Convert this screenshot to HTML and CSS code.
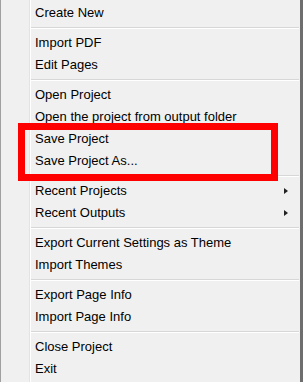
FILE: index.html
```html
<!DOCTYPE html>
<html>
<head>
<meta charset="utf-8">
<link rel="stylesheet" href="styles.css">
</head>
<body>
<div class="menu">
  <div class="item">Create New</div>
  <div class="sep"></div>
  <div class="item">Import PDF</div>
  <div class="item">Edit Pages</div>
  <div class="sep"></div>
  <div class="item">Open Project</div>
  <div class="item">Open the project from output folder</div>
  <div class="item">Save Project</div>
  <div class="item">Save Project As...</div>
  <div class="sep"></div>
  <div class="item"><span>Recent Projects</span><span class="arrow"></span></div>
  <div class="item"><span>Recent Outputs</span><span class="arrow"></span></div>
  <div class="sep"></div>
  <div class="item">Export Current Settings as Theme</div>
  <div class="item">Import Themes</div>
  <div class="sep"></div>
  <div class="item">Export Page Info</div>
  <div class="item">Import Page Info</div>
  <div class="sep"></div>
  <div class="item">Close Project</div>
  <div class="item">Exit</div>
  <div class="highlight"></div>
</div>
</body>
</html>
```
FILE: styles.css
```css
html, body {
  margin: 0;
  padding: 0;
  background: #f0f0f0;
}
.menu {
  position: relative;
  width: 303px;
  height: 382px;
  box-sizing: border-box;
  padding: 2px 1px 0 0;
  display: flex;
  flex-direction: column;
  background-color: #f0f0f0;
  background-image: linear-gradient(to right, transparent 28px, #e2e3e3 28px, #e2e3e3 29px, #ffffff 29px, #ffffff 30px, transparent 30px);
  border-left: 1px solid #a0a0a0;
  border-right: 3px solid #6e6e6e;
  font-family: "Liberation Sans", Arial, sans-serif;
  font-size: 13px;
  color: #000;
  overflow: hidden;
}
.item {
  height: 22px;
  line-height: 22px;
  padding: 0 11px 0 34px;
  display: flex;
  justify-content: space-between;
  align-items: center;
  white-space: nowrap;
}
.sep {
  height: 8px;
  margin-left: 30px;
  display: flex;
  flex-direction: column;
  justify-content: center;
}
.sep::before {
  content: "";
  display: block;
  height: 1px;
  background: #d7d7d7;
}
.sep::after {
  content: "";
  display: block;
  height: 1px;
  background: #ffffff;
}
.arrow {
  width: 0;
  height: 0;
  border-top: 3.5px solid transparent;
  border-bottom: 3.5px solid transparent;
  border-left: 4px solid #222;
}
.highlight {
  position: absolute;
  left: 17px;
  top: 123px;
  width: 260px;
  height: 58px;
  box-sizing: border-box;
  border: 7px solid #ff0000;
}
```
